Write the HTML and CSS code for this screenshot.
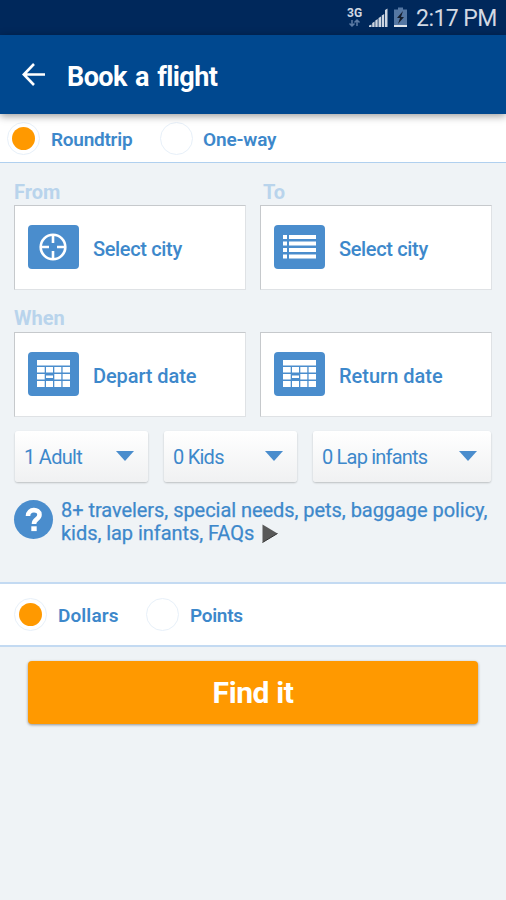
FILE: index.html
```html
<!DOCTYPE html>
<html lang="en">
<head>
<meta charset="utf-8">
<title>Book a flight</title>
<link rel="stylesheet" href="styles.css">
</head>
<body>
<svg width="0" height="0" class="defs">
  <symbol id="calendar" viewBox="0 0 33 28">
    <path fill="#fff" d="M0 0h33v5.500h-33zM0 7h7.700v5.500H0zM9 7h7v5.500H9zM17.300 7h7v5.500h-7zM25.600 7H33v5.500h-7.400zM0 14h7.700v5.500H0zM17.300 14h7v5.500h-7zM25.600 14H33v5.500h-7.400zM0 21h7.700v6H0zM9 21h7v6H9zM17.300 21h7v6h-7zM25.600 21H33v6h-7.400zM9 15.500h7v2.400H9z"/>
  </symbol>
</svg>
<div class="status">
  <svg class="signals" width="62" height="24" viewBox="0 0 62 24">
    <path d="M3 14v6M.5 17.500L3 20l2.500-2.500M8 20v-6M5.500 16.500L8 14l2.500 2.500" fill="none" stroke="#5d7ba4" stroke-width="1.500"/>
    <path d="M20 21v-1.500l2.500-1V21zM23.200 21v-4l2.400-1.500V21zM26.300 21v-6.500l2.400-1.500v8zM29.500 21v-9l2.500-1.500V21zM32.700 21V9.500L35.200 8v13zM36 21V4L38.500 2.500V21z" fill="#cdd5e1"/>
    <path d="M45 3.500h4V1.500h5v2h4V19H45z" fill="#5577a3"/>
    <path d="M45 19h13v2H45z" fill="#e1e6ec"/>
    <path d="M54 5l-6 7h3l-2 6 6-7h-3z" fill="#141d2c"/>
  </svg>
  <span class="net">3G</span>
  <span class="time">2:17 PM</span>
</div>
<header class="bar">
  <svg width="24" height="24" viewBox="0 0 24 24"><path d="M23 11.500H2M12 1L1.800 11.500 12 22" fill="none" stroke="#fff" stroke-width="2.600"/></svg>
  <h1>Book a flight</h1>
</header>
<div class="radios trip">
  <span class="radio on"></span><span class="label t-round">Roundtrip</span>
  <span class="radio"></span><span class="label t-one">One-way</span>
</div>
<main>
  <div class="grid heads"><span class="from">From</span><span class="to">To</span></div>
  <div class="grid">
    <div class="card">
      <span class="icon"><svg width="28" height="28" viewBox="0 0 28 28"><path d="M14 2v8M14 18v8M2 14h8M18 14h8" stroke="#fff" stroke-width="2.600"/><circle cx="14" cy="14" r="12.300" fill="none" stroke="#fff" stroke-width="2.600"/></svg></span>
      <span class="t-city">Select city</span>
    </div>
    <div class="card">
      <span class="icon"><svg width="33" height="26" viewBox="0 0 33 26"><path fill="#fff" d="M0 1h4v4H0zM6 1h27v4H6zM0 7.500h4v4H0zM6 7.500h27v4H6zM0 14h4v4H0zM6 14h27v4H6zM0 20.500h4v4H0zM6 20.500h27v4H6z"/></svg></span>
      <span class="t-city">Select city</span>
    </div>
  </div>
  <div class="when">When</div>
  <div class="grid">
    <div class="card date"><span class="icon"><svg width="33" height="28"><use href="#calendar"/></svg></span><span class="t-dep">Depart date</span></div>
    <div class="card date"><span class="icon"><svg width="33" height="28"><use href="#calendar"/></svg></span><span class="t-ret">Return date</span></div>
  </div>
  <div class="selects">
    <div class="select"><span class="t-adult">1 Adult</span><i class="caret"></i></div>
    <div class="select"><span class="t-kids">0 Kids</span><i class="caret"></i></div>
    <div class="select"><span class="t-lap">0 Lap infants</span><i class="caret"></i></div>
  </div>
  <div class="help">
    <span class="q"><svg width="39" height="39" viewBox="0 0 39 39"><path d="M14 16c0-7.800 11.500-7.500 11.500-1.300 0 5-5.500 3.800-5.500 9.300" fill="none" stroke="#fff" stroke-width="4.600"/><path d="M17.300 26.300h5.400v4.800h-5.400z" fill="#fff"/></svg></span>
    <p><span class="line1">8+ travelers, special needs, pets, baggage policy,</span><br><span class="line2">kids, lap infants, FAQs</span><svg class="play" width="16" height="19" viewBox="0 0 16 19"><path d="M.5.500l15 9-15 9z" fill="#595959"/><path d="M.5 18.500l15-9" stroke="#333"/></svg></p>
  </div>
</main>
<div class="radios pay">
  <span class="radio on"></span><span class="label t-dol">Dollars</span>
  <span class="radio"></span><span class="label t-pts">Points</span>
</div>
<div class="find"><span>Find it</span></div>
</body>
</html>
```
FILE: styles.css
```css
* { box-sizing: border-box; }
body { margin: 0; height: 900px; overflow: hidden; background: #eff3f6; font-family: Roboto, "Liberation Sans", sans-serif; color: #3d88cb; white-space: nowrap; }
svg { display: block; flex: none; }
.defs { position: absolute; }
.status { height: 35px; background: #00285b; display: flex; align-items: center; justify-content: flex-end; padding-right: 11px; color: #d2d9e3; position: relative; }
.signals { margin: 0 5px 0 0; }
.net { position: absolute; left: 347px; top: 6px; font: 700 12px/14px Roboto, sans-serif; }
.time { width: 79px; font-size: 23px; letter-spacing: -.55px; margin-top: 2px; }
.bar { height: 79px; background: #00488f; display: flex; align-items: center; padding-left: 22px; position: relative; z-index: 1; box-shadow: 0 2px 8px rgba(0,0,0,.4); }
h1 { margin: 4px 0 0 21px; color: #fff; font-size: 27px; font-weight: 700; letter-spacing: -.6px; word-spacing: 2.200px; }
.radios { display: flex; align-items: center; background: #fff; font-size: 19px; font-weight: 600; }
.trip { height: 49px; padding: 0 0 0 7px; border-bottom: 1px solid #b0d0ef; }
.pay { height: 65px; border-top: 2px solid #c3daf2; border-bottom: 2px solid #c3daf2; padding-left: 14px; }
.radio { width: 33px; height: 33px; border: 1px solid #e7f0f9; border-radius: 50%; flex: none; display: flex; align-items: center; justify-content: center; }
.on::before { content: ""; width: 23px; height: 23px; border-radius: 50%; background: #f90; }
.label { margin-left: 11px; margin-top: 2px; }
.t-round { width: 109px; letter-spacing: -.25px; }
.t-one { letter-spacing: -.15px; margin-left: 10px; }
.t-dol { width: 88px; letter-spacing: .1px; }
.t-pts { letter-spacing: -.3px; }
main { height: 419px; padding: 18px 14px 0; }
.grid { display: grid; grid-template-columns: 232px 232px; gap: 14px; }
.heads, .when { height: 24px; line-height: 22px; font-size: 20px; font-weight: 700; color: #b9d4ec; }
.when { height: 23px; line-height: 19px; margin-top: 19px; }
.to { padding-left: 3px; }
.card { height: 85px; background: #fff; border: 1px solid #c6c9cc; border-right-color: #dfe2e5; border-bottom-color: #dfe2e5; display: flex; align-items: center; padding-left: 13px; font-size: 20px; font-weight: 500; }
.card > span:last-child { margin: 2px 0 0 14px; }
.card .t-city { letter-spacing: -.35px; }
.card .t-dep { letter-spacing: -.1px; }
.icon { width: 51px; height: 44px; margin-bottom: 1px; padding-right: 1px; border-radius: 4px; background: #4a8dcd; display: flex; align-items: center; justify-content: center; flex: none; }
.date .icon { margin-bottom: 2px; }
.selects { display: grid; grid-template-columns: 133px 133px 178px; gap: 16px; margin: 14px 0 0 1px; }
.select { height: 51px; border-radius: 3px; background: linear-gradient(#fff, #f0f1f2); box-shadow: 0 1px 2px rgba(0,0,0,.22); display: flex; align-items: center; justify-content: space-between; padding: 0 14px 0 9px; font-size: 20px; }
.t-adult { letter-spacing: -.7px; }
.t-kids { letter-spacing: -.75px; }
.t-lap { letter-spacing: -.8px; }
.caret { margin-bottom: 1px; border: 9px solid transparent; border-top: 10px solid #4a8dcd; border-bottom: 0; }
.help { display: flex; align-items: flex-start; margin-top: 17px; }
.q { width: 39px; height: 39px; border-radius: 50%; background: #4a8dcd; margin-top: 1px; }
p { margin: 0 0 0 8px; font-size: 20px; line-height: 23px; letter-spacing: -.05px; -webkit-text-stroke: .25px #3d88cb; }
.play { display: inline-block; vertical-align: -3px; margin-left: 8px; }
.find { margin: 14px 28px 0; height: 63px; border-radius: 4px; background: #f90; box-shadow: 0 1px 3px rgba(0,0,0,.4); display: flex; align-items: center; justify-content: center; color: #fff; font-size: 30px; font-weight: 700; letter-spacing: -.4px; }
```
